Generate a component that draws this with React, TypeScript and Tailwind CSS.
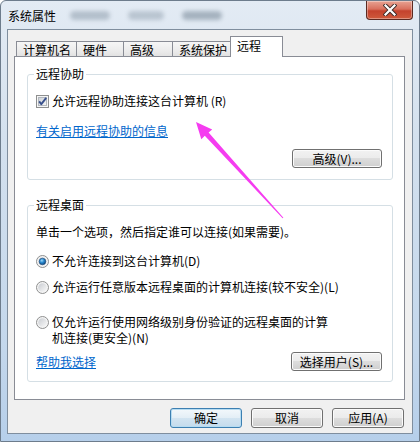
import React from "react";

function Checkbox() {
  return (
    <svg width="13" height="13" viewBox="0 0 13 13" className="shrink-0">
      <defs>
        <linearGradient id="cbg" x1="0" y1="0" x2="1" y2="1">
          <stop offset="0" stopColor="#cdd1d6" />
          <stop offset="1" stopColor="#f7f7f7" />
        </linearGradient>
      </defs>
      <rect x="0.5" y="0.5" width="12" height="12" fill="#f6f6f6" stroke="#8e8f8f" />
      <rect x="2.5" y="2.5" width="8" height="8" fill="url(#cbg)" stroke="#b3b8be" />
      <path d="M3.2 6.4 L5.3 9.2 L10.2 2.8" stroke="#38508c" strokeWidth="1.9" fill="none" strokeLinejoin="round" />
    </svg>
  );
}

function Radio({ checked }: { checked?: boolean }) {
  return (
    <svg width="13" height="13" viewBox="0 0 13 13" className="shrink-0">
      <defs>
        <linearGradient id="rbg" x1="0" y1="0" x2="1" y2="1">
          <stop offset="0" stopColor="#c9ccd1" />
          <stop offset="1" stopColor="#f9f9f9" />
        </linearGradient>
        <radialGradient id="rdot" cx="0.4" cy="0.35" r="0.7">
          <stop offset="0" stopColor="#9fd8f8" />
          <stop offset="0.45" stopColor="#2b8bd0" />
          <stop offset="1" stopColor="#0d3f75" />
        </radialGradient>
      </defs>
      <circle cx="6.5" cy="6.5" r="6" fill="#f4f4f4" stroke="#8e8f8f" />
      <circle cx="6.5" cy="6.5" r="4.3" fill="url(#rbg)" />
      {checked && <circle cx="6.5" cy="6.5" r="3.3" fill="url(#rdot)" stroke="#1a4a7c" strokeWidth="0.6" />}
    </svg>
  );
}

function Btn({ children, className = "", focused = false }: { children: React.ReactNode; className?: string; focused?: boolean }) {
  return (
    <div
      className={
        "flex items-center justify-center rounded-[3px] border leading-[14px] " +
        (focused
          ? "border-[#3c7fb1] bg-[linear-gradient(180deg,#f3f8fb_0%,#e3eef6_50%,#d2e4f1_50%,#c4dbec_100%)] shadow-[inset_0_0_0_1px_#b6dcf2]"
          : "border-[#707070] bg-[linear-gradient(180deg,#f2f2f2_0%,#ebebeb_50%,#dddddd_50%,#cfcfcf_100%)] shadow-[inset_0_0_0_1px_#fbfbfb]") +
        " " +
        className
      }
    >
      {children}
    </div>
  );
}

function Tab({ label, w, selected = false, first = false }: { label: string; w: string; selected?: boolean; first?: boolean }) {
  return (
    <div
      className={
        "flex items-start border border-b-0 border-[#898c95] pl-[6px] leading-[14px] " +
        w +
        " " +
        (first ? "" : "-ml-[1px] ") +
        (selected
          ? "relative z-10 h-[21px] bg-white pt-[2px]"
          : "h-[16px] bg-[linear-gradient(180deg,#f6f6f6_0%,#ebebeb_60%,#e0e0e0_100%)] pt-[1px]")
      }
    >
      {label}
    </div>
  );
}

export default function App() {
  return (
    <div className="relative h-[442px] w-[420px] overflow-hidden bg-white font-['Noto_Sans_CJK_SC','Noto_Sans',sans-serif] text-[12px] text-black">
      <div className="flex h-full w-full flex-col rounded-t-[6px] border border-[#6d7c8c] bg-[linear-gradient(180deg,#e3ebf4_0%,#d4e1ee_30%,#c3d7ec_80%,#b6cfea_100%)] px-[6px] pb-[7px]">
        {/* title bar */}
        <div className="relative flex h-[28px] shrink-0 items-center pl-[1px] pt-[1px]">
          <span className="leading-[14px]">系统属性</span>
          <div className="ml-[14px] h-[9px] w-[40px] rounded-full bg-[#6f8090] opacity-40 blur-[2px]" />
          <div className="ml-[18px] h-[9px] w-[36px] rounded-full bg-[#6f8090] opacity-35 blur-[2px]" />
          <div className="ml-[18px] h-[9px] w-[40px] rounded-full bg-[#5d6f80] opacity-45 blur-[2px]" />
        </div>
        <div className="absolute right-[7px] top-[1px] flex h-[19px] w-[47px] items-center justify-center rounded-b-[4px] border border-t-0 border-[#5b2a22] bg-[linear-gradient(180deg,#e8a393_0%,#d9705d_45%,#c4422d_55%,#cf5a3c_100%)] shadow-[inset_0_0_0_1px_rgba(255,255,255,0.35)]">
          <svg width="14" height="12" viewBox="0 0 14 12">
            <path d="M2.5 1.5 L11.5 10.5 M11.5 1.5 L2.5 10.5" stroke="#3a2a28" strokeWidth="4" strokeLinecap="square" />
            <path d="M2.5 1.5 L11.5 10.5 M11.5 1.5 L2.5 10.5" stroke="#ffffff" strokeWidth="2.2" strokeLinecap="square" />
          </svg>
        </div>

        {/* body */}
        <div className="flex flex-1 flex-col border border-[#7f8e9e] bg-[#f0f0f0] pl-[6px] pr-[7px] pt-[6px]">
          {/* tabs */}
          <div className="flex h-[21px] items-end pl-[2px]">
            <Tab label="计算机名" w="w-[61px]" first />
            <Tab label="硬件" w="w-[48px]" />
            <Tab label="高级" w="w-[50px]" />
            <Tab label="系统保护" w="w-[59px]" />
            <Tab label="远程" w="w-[53px]" selected />
          </div>
          {/* panel */}
          <div className="-mt-[1px] flex h-[344px] flex-col border border-[#898c95] bg-white pl-[12px] pr-[11px]">
            {/* group 1 */}
            <div className="relative mt-[17px] flex flex-col rounded-[3px] border border-[#d5dfe5] pb-[11px] pl-[8px] pr-[10px] pt-[18px]">
              <span className="absolute -top-[8px] left-[6px] bg-white px-[2px] leading-[14px]">远程协助</span>
              <div className="flex h-[16px] items-center gap-[3px]">
                <Checkbox />
                <span className="leading-[14px]">允许远程协助连接这台计算机 (R)</span>
              </div>
              <div className="mt-[14px] flex h-[16px] items-center">
                <span className="leading-[14px] text-[#0066cc] underline">有关启用远程协助的信息</span>
              </div>
              <div className="mt-[10px] flex justify-end">
                <Btn className="h-[19px] w-[90px]">高级(V)...</Btn>
              </div>
            </div>
            {/* group 2 */}
            <div className="relative mt-[25px] flex flex-col rounded-[3px] border border-[#d5dfe5] pb-[10px] pl-[8px] pr-[10px] pt-[18px]">
              <span className="absolute -top-[8px] left-[6px] bg-white px-[2px] leading-[14px]">远程桌面</span>
              <div className="flex h-[16px] items-center">
                <span className="leading-[14px]">单击一个选项，然后指定谁可以连接(如果需要)。</span>
              </div>
              <div className="mt-[13px] flex h-[16px] items-center gap-[3px]">
                <Radio checked />
                <span className="leading-[14px]">不允许连接到这台计算机(D)</span>
              </div>
              <div className="mt-[10px] flex h-[16px] items-center gap-[3px]">
                <Radio />
                <span className="leading-[14px]">允许运行任意版本远程桌面的计算机连接(较不安全)(L)</span>
              </div>
              <div className="mt-[19px] flex items-start gap-[3px]">
                <div className="mt-[2px]">
                  <Radio />
                </div>
                <div className="flex flex-col leading-[17px] -my-[0.5px]">
                  <span className="h-[16px] leading-[16px]">仅允许运行使用网络级别身份验证的远程桌面的计算</span>
                  <span className="h-[16px] leading-[16px]">机连接(更安全)(N)</span>
                </div>
              </div>
              <div className="mt-[7px] flex h-[19px] items-center justify-between">
                <span className="leading-[14px] text-[#0066cc] underline">帮助我选择</span>
                <Btn className="h-[19px] w-[91px]">选择用户(S)...</Btn>
              </div>
            </div>
          </div>
          {/* bottom buttons */}
          <div className="mt-[8px] flex justify-end gap-[9px] pr-[1px]">
            <Btn focused className="h-[20px] w-[72px]">确定</Btn>
            <Btn className="h-[20px] w-[72px]">取消</Btn>
            <Btn className="h-[20px] w-[72px]">应用(A)</Btn>
          </div>
        </div>
      </div>

      {/* magenta arrow annotation */}
      <svg className="pointer-events-none absolute left-0 top-0" width="420" height="442" viewBox="0 0 420 442">
        <polygon
          points="196,122 212.2,129.4 208.6,132.4 283.4,217.7 282.6,218.3 204.8,135.8 201.3,139.2"
          fill="#f53cf0"
        />
      </svg>
    </div>
  );
}
